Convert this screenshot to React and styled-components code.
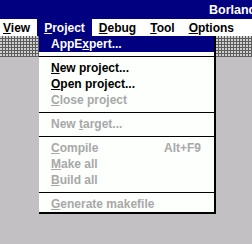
import React from "react";
import styled, { createGlobalStyle } from "styled-components";

const Global = createGlobalStyle`
  html, body { margin: 0; padding: 0; }
  body { width: 252px; height: 244px; overflow: hidden; background: #c0c0c0; }
`;

const Window = styled.div`
  position: relative;
  width: 252px;
  height: 244px;
  display: flex;
  flex-direction: column;
  font-family: "Liberation Sans", Arial, sans-serif;
  font-weight: bold;
  font-size: 12px;
  overflow: hidden;
`;

const TitleBar = styled.div`
  height: 19px;
  background: #000080;
  color: #fff;
  display: flex;
  align-items: center;
  padding-left: 209px;
  font-size: 12.5px;
  white-space: nowrap;
  overflow: hidden;
`;

const MenuBar = styled.div`
  height: 17px;
  background: #fff;
  display: flex;
  align-items: stretch;
  white-space: nowrap;
`;

const BarItem = styled.div`
  display: flex;
  align-items: center;
  padding: 0 7px;
  color: ${(p) => (p.$active ? "#fff" : "#000")};
  background: ${(p) => (p.$active ? "#000080" : "transparent")};
  &:first-child { padding-left: 3px; }
`;

const SpeedBar = styled.div`
  height: 20px;
  border-bottom: 1px solid #606060;
  background-image:
    linear-gradient(90deg, transparent 2px, #5c5c5c 2px),
    linear-gradient(transparent 2px, #5c5c5c 2px);
  background-size: 3px 3px;
  background-color: #cfcfcf;
`;

const Workspace = styled.div`
  flex: 1;
  background: #c3c0c3;
`;

const DropMenu = styled.div`
  position: absolute;
  top: 36px;
  left: 39px;
  width: 175px;
  background: #fcfffc;
  border-right: 2px solid #000;
  border-bottom: 2px solid #000;
  display: flex;
  flex-direction: column;
`;

const Item = styled.div`
  height: 16px;
  display: flex;
  align-items: center;
  justify-content: space-between;
  padding: 0 13px 0 12px;
  white-space: nowrap;
  color: ${(p) => (p.$selected ? "#fff" : p.$disabled ? "#a8a8a8" : "#000")};
  background: ${(p) => (p.$selected ? "#000080" : "transparent")};
`;

const Separator = styled.div`
  height: 8px;
  display: flex;
  align-items: center;
  &::after {
    content: "";
    flex: 1;
    height: 1px;
    background: #000;
  }
`;

const menu = [
  { pre: "AppE", u: "x", post: "pert...", selected: true },
  { sep: true },
  { u: "N", post: "ew project..." },
  { u: "O", post: "pen project..." },
  { u: "C", post: "lose project", disabled: true },
  { sep: true },
  { pre: "New ", u: "t", post: "arget...", disabled: true },
  { sep: true },
  { u: "C", post: "ompile", disabled: true, key: "Alt+F9" },
  { u: "M", post: "ake all", disabled: true },
  { u: "B", post: "uild all", disabled: true },
  { sep: true },
  { u: "G", post: "enerate makefile", disabled: true },
];

const bar = [
  { u: "V", post: "iew" },
  { u: "P", post: "roject", active: true },
  { u: "D", post: "ebug" },
  { u: "T", post: "ool" },
  { u: "O", post: "ptions" },
];

export default function App() {
  return (
    <Window>
      <Global />
      <TitleBar>Borland C++</TitleBar>
      <MenuBar>
        {bar.map((b, i) => (
          <BarItem key={i} $active={b.active}>
            <span>
              <u>{b.u}</u>
              {b.post}
            </span>
          </BarItem>
        ))}
      </MenuBar>
      <SpeedBar />
      <Workspace />
      <DropMenu>
        {menu.map((m, i) =>
          m.sep ? (
            <Separator key={i} />
          ) : (
            <Item key={i} $selected={m.selected} $disabled={m.disabled}>
              <span>
                {m.pre}
                <u>{m.u}</u>
                {m.post}
              </span>
              {m.key && <span>{m.key}</span>}
            </Item>
          )
        )}
      </DropMenu>
    </Window>
  );
}
